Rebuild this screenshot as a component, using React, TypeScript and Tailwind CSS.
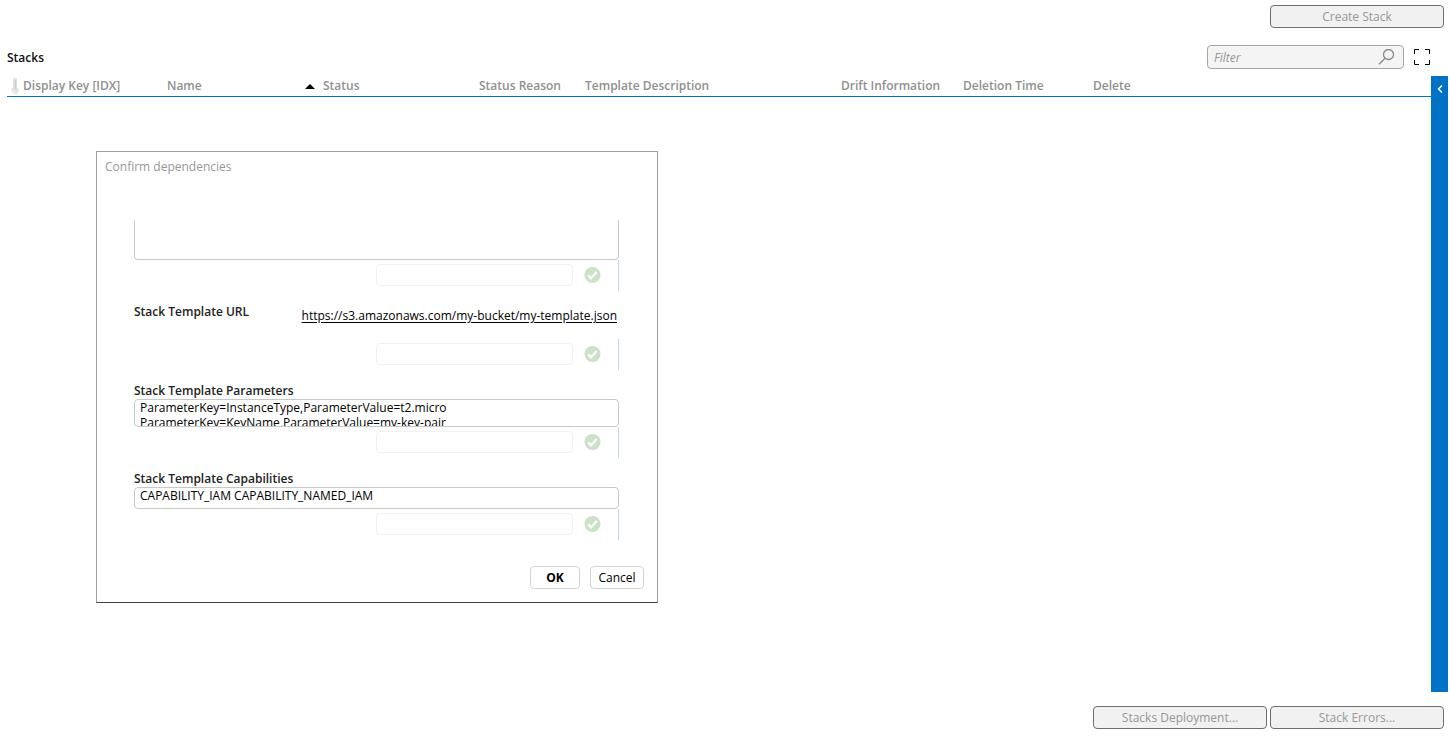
import type { ReactNode } from 'react'

const columns = [
  { label: 'Display Key [IDX]', width: 'w-[160px]', icon: true },
  { label: 'Name', width: 'w-[156px]', sorted: true },
  { label: 'Status', width: 'w-[156px]' },
  { label: 'Status Reason', width: 'w-[106px]' },
  { label: 'Template Description', width: 'w-[256px]' },
  { label: 'Drift Information', width: 'w-[122px]' },
  { label: 'Deletion Time', width: 'w-[130px]' },
  { label: 'Delete', width: '' },
]

function Thermometer() {
  return (
    <svg width="16" height="18" viewBox="0 0 16 18" className="shrink-0" aria-hidden="true">
      <path d="M6 2.500a2 2 0 0 1 4 0v8a3.600 3.600 0 1 1-4 0z" fill="#e2e2e2" />
      <path d="M8.500 3v9" stroke="#cdcdcd" strokeWidth="1.500" />
      <path d="M6 13.500a2 2 0 0 0 2 2" fill="none" stroke="#fff" />
    </svg>
  )
}

function CheckCircle() {
  return (
    <svg width="17" height="17" viewBox="0 0 17 17" className="shrink-0" aria-hidden="true">
      <circle cx="8.5" cy="8" r="8" fill="#cbe2c8" />
      <path d="M4 8.300l3 3 5.800-6.200" fill="none" stroke="#fff" strokeWidth="2.2" />
    </svg>
  )
}

function Magnifier() {
  return (
    <svg width="17" height="17" viewBox="0 0 17 17" className="shrink-0" aria-hidden="true">
      <circle cx="10.5" cy="5.5" r="5" fill="none" stroke="#888" strokeWidth="1.3" />
      <path d="M7 9.200L1 15.200" stroke="#888" strokeWidth="1.3" />
    </svg>
  )
}

function ActionButton({ children }: { children: ReactNode }) {
  return (
    <button className="w-[174px] h-[23px] rounded border border-[#6e6e6e] bg-[#f1f1f1] text-[#979797]">
      {children}
    </button>
  )
}

// Empty value box with its status, shown below every field
function Confirmation({ label }: { label: string }) {
  return (
    <div className="flex h-[31px] items-start justify-end gap-[11px] border-r border-[#bcd9ee] pr-[17px] pt-1">
      <input aria-label={label} className="h-[22px] w-[197px] rounded border border-[#f1f1f1] px-1" />
      <div className="flex h-[22px] items-center">
        <CheckCircle />
      </div>
    </div>
  )
}

function DependenciesDialog() {
  return (
    <div
      role="dialog"
      aria-labelledby="dialog-title"
      className="absolute left-24 top-[151px] w-[562px] border border-[#a0a0a0] border-b-[#404040] bg-white pb-[13px]"
    >
      <h2 id="dialog-title" className="px-2 pt-[7px] leading-4 text-[#979797]">Confirm dependencies</h2>

      <div className="ml-[37px] mr-[38px] mt-[45px]">
        <textarea
          aria-label="Stack Template Body"
          className="block h-10 w-full resize-none rounded-b border border-t-0 border-[#c8c8c8] px-[5px]"
        />
        <Confirmation label="Confirm template body" />

        <div className="mt-[13px] flex h-[35px] items-start justify-between leading-4">
          <span className="font-semibold text-[#222]">Stack Template URL</span>
          <a href="#template" className="mr-0.5 pt-1 text-black underline underline-offset-2">
            https://s3.amazonaws.com/my-bucket/my-template.json
          </a>
        </div>
        <Confirmation label="Confirm template URL" />

        <label htmlFor="parameters" className="mt-[13px] block font-semibold leading-4 text-[#222]">
          Stack Template Parameters
        </label>
        <textarea
          id="parameters"
          className="block h-7 w-full resize-none overflow-hidden rounded border border-[#c8c8c8] px-[5px] leading-[15px] text-black"
          defaultValue={'ParameterKey=InstanceType,ParameterValue=t2.micro\nParameterKey=KeyName,ParameterValue=my-key-pair'}
        />
        <Confirmation label="Confirm parameters" />

        <label htmlFor="capabilities" className="mt-[13px] block font-semibold leading-4 text-[#222]">
          Stack Template Capabilities
        </label>
        <textarea
          id="capabilities"
          className="block h-[22px] w-full resize-none overflow-hidden rounded border border-[#c8c8c8] px-[5px] leading-[15px] text-black"
          defaultValue="CAPABILITY_IAM CAPABILITY_NAMED_IAM"
        />
        <Confirmation label="Confirm capabilities" />
      </div>

      <div className="mr-[13px] mt-[26px] flex justify-end gap-2.5 text-black">
        <button className="h-[23px] w-[50px] rounded border border-[#d4d4d4] bg-white font-bold">OK</button>
        <button className="h-[23px] w-[54px] rounded border border-[#d4d4d4] bg-white">Cancel</button>
      </div>
    </div>
  )
}

export default function App() {
  return (
    <div className="relative flex min-h-screen flex-col bg-white font-['Open_Sans',sans-serif] text-[12px]">
      <header className="flex justify-end pr-1.5 pt-[5px]">
        <ActionButton>Create Stack</ActionButton>
      </header>

      <div className="mt-[17px] flex items-center pl-[7px] pr-5">
        <h1 className="flex-1 pt-0.5 font-semibold text-[#111]">Stacks</h1>
        <label className="flex h-6 w-[197px] items-center rounded border border-[#a6a6a6] bg-[#f4f4f4] pl-1.5 pr-2">
          <input
            aria-label="Filter"
            placeholder="Filter"
            className="min-w-0 flex-1 bg-transparent pt-0.5 italic outline-none placeholder:text-[#979797]"
          />
          <Magnifier />
        </label>
        <button aria-label="Full screen" className="ml-2.5">
          <svg width="16" height="16" viewBox="0 0 16 16" fill="none" stroke="#000">
            <path d="M.5 5V.5H5M11 .5h4.500V5M15.500 11v4.500H11M5 15.500H.5V11" />
          </svg>
        </button>
      </div>

      <main className="mt-[7px] flex flex-1 items-stretch pl-[7px] pr-0.5">
        <div className="min-w-0 flex-1">
          <table className="w-full table-fixed border-separate border-spacing-0">
            <thead>
              <tr className="text-left text-[#8f8f8f]">
                {columns.map((col) => (
                  <th key={col.label} className={`${col.width} h-[21px] border-b border-[#0072c6] p-0 font-semibold leading-4`}>
                    <div className="flex items-center">
                      {col.icon && <Thermometer />}
                      {col.label}
                      {col.sorted && (
                        <svg width="10" height="5" viewBox="0 0 10 5" className="ml-auto mr-2" aria-label="Sorted ascending">
                          <path d="M0 5L5 0l5 5z" fill="#000" />
                        </svg>
                      )}
                    </div>
                  </th>
                ))}
              </tr>
            </thead>
            <tbody />
          </table>
        </div>
        <button aria-label="Expand panel" className="flex w-[17px] items-start justify-center bg-[#0072c6] pt-[9px]">
          <svg width="6" height="8" viewBox="0 0 6 8" fill="none" stroke="#fff" strokeWidth="1.5">
            <path d="M5 .5L1.500 4 5 7.500" />
          </svg>
        </button>
      </main>

      <footer className="flex justify-end gap-[3px] pb-2 pr-1.5 pt-3.5">
        <ActionButton>Stacks Deployment...</ActionButton>
        <ActionButton>Stack Errors...</ActionButton>
      </footer>

      <DependenciesDialog />
    </div>
  )
}
